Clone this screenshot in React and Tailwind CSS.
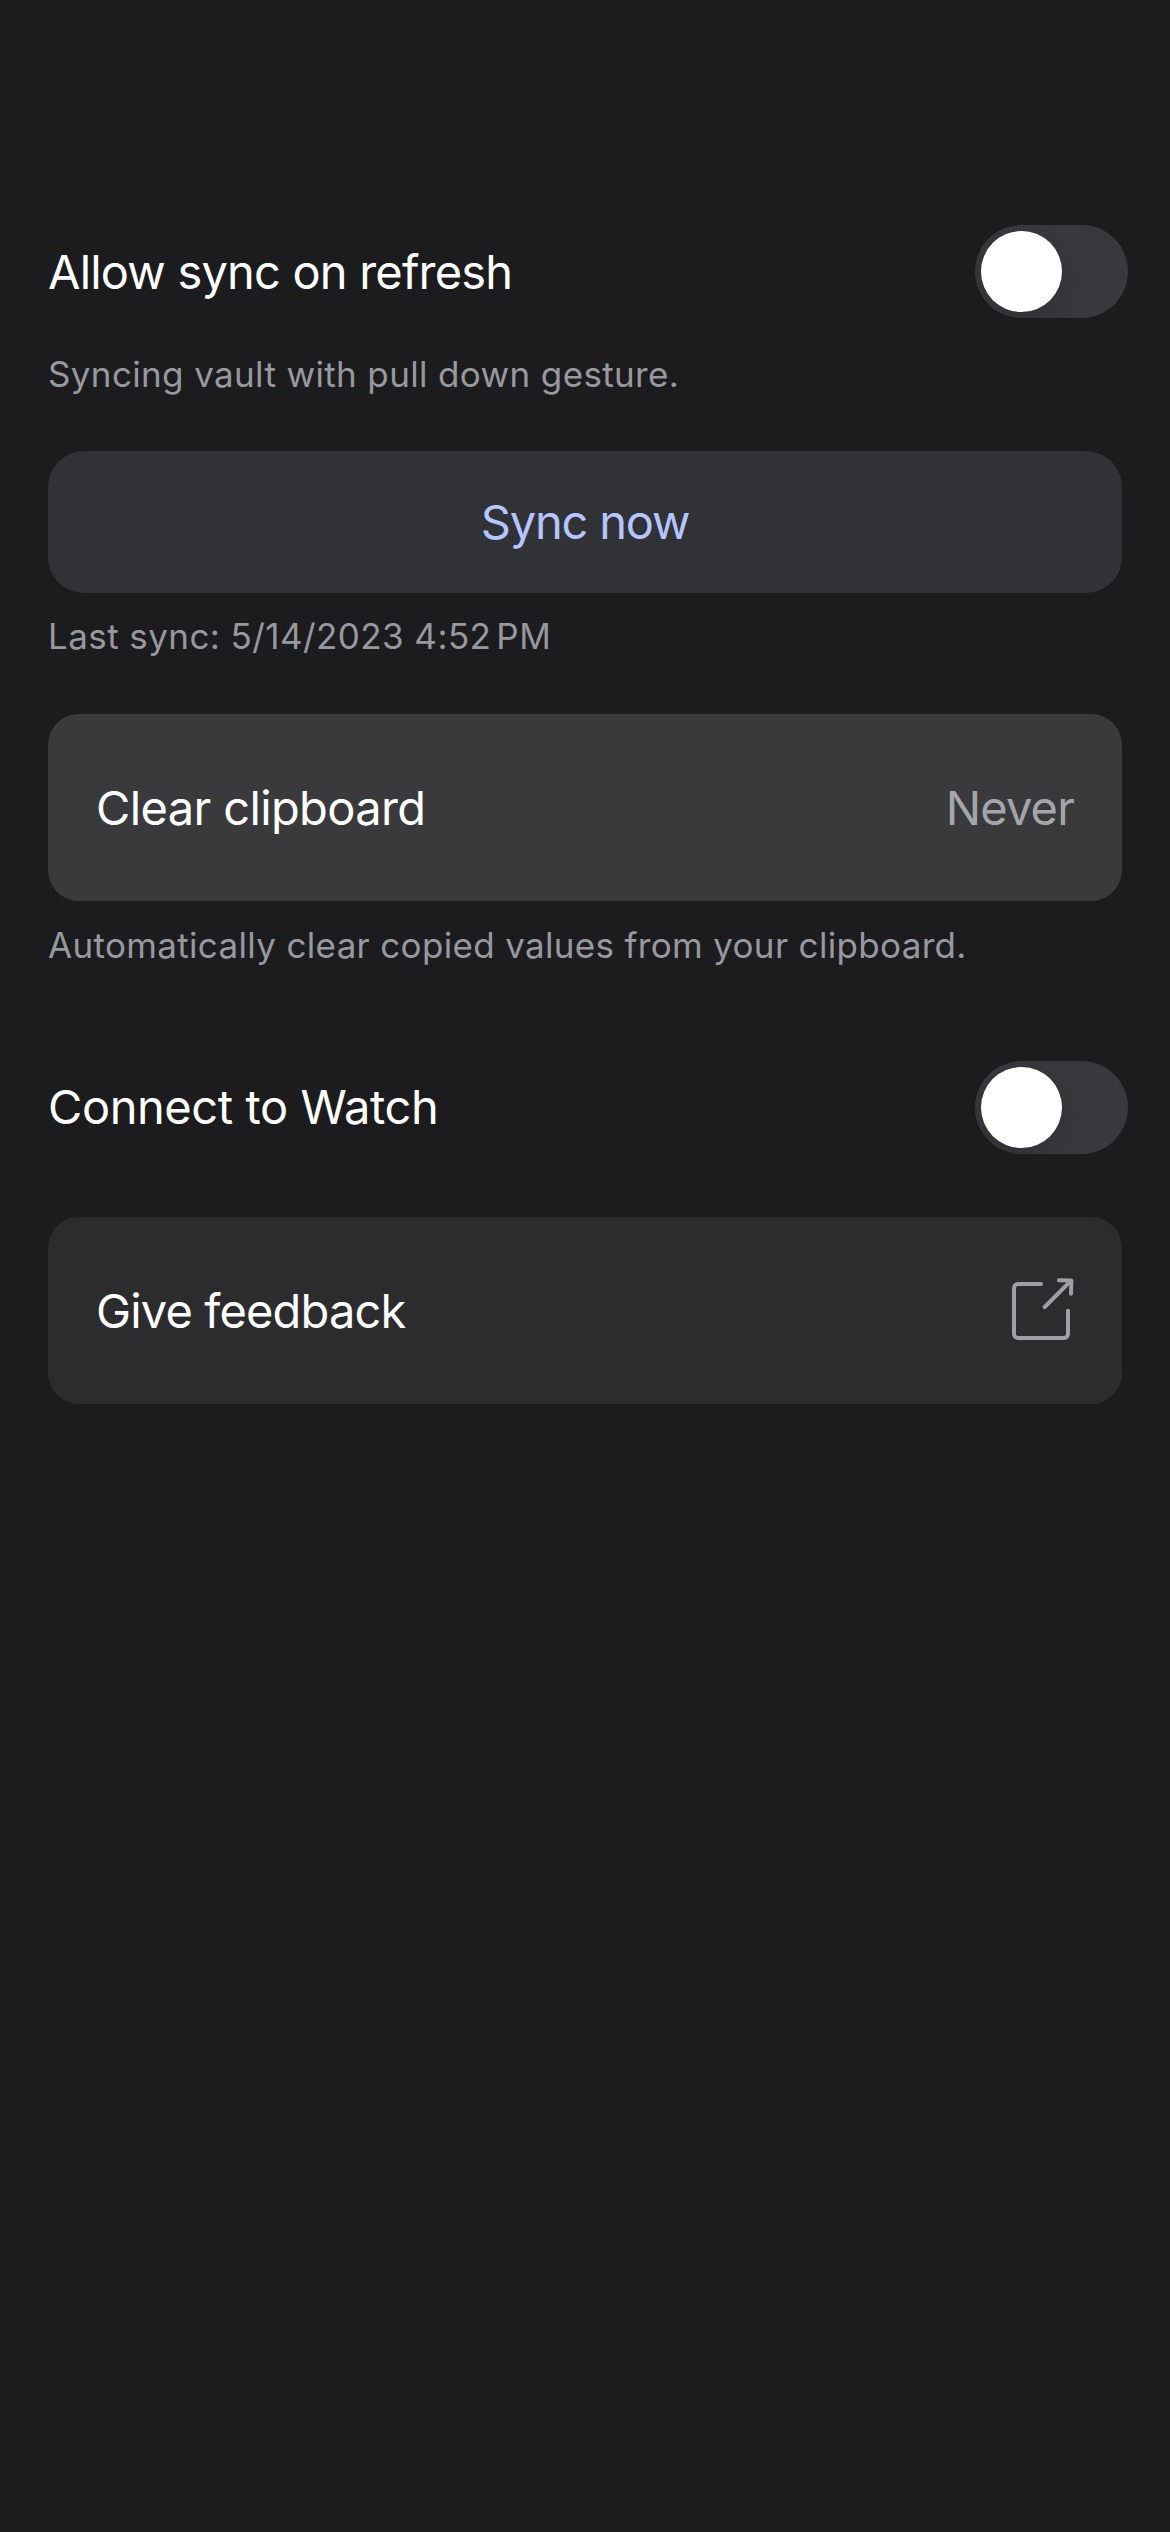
function Toggle({ label }) {
  return (
    <button
      type="button"
      role="switch"
      aria-checked="false"
      aria-label={label}
      className="flex h-[93px] w-[153px] shrink-0 items-center overflow-hidden rounded-full bg-[#39393d] p-[6px]"
    >
      <span className="size-[81px] rounded-full bg-white shadow-[0_9px_24px_rgba(0,0,0,0.15)]" />
    </button>
  );
}

function ExternalIcon() {
  return (
    <svg
      viewBox="0 0 62 62"
      className="mb-[3px] size-[62px] text-[#9f9fa6]"
      fill="none"
      stroke="currentColor"
      strokeWidth="4"
      strokeLinecap="round"
      strokeLinejoin="round"
      aria-hidden="true"
    >
      <path d="M29 6H6a4 4 0 0 0-4 4v46a4 4 0 0 0 4 4h46a4 4 0 0 0 4-4V32.8" />
      <path d="M32.7 29 59 2.7M46.8 2.2l12 .3q.6 0 .6.6L59 15.8" />
    </svg>
  );
}

export default function App() {
  return (
    <main className="min-h-[2532px] w-[1170px] bg-[#1c1c1e] px-12 pt-[225px] font-['Inter',sans-serif] text-[47px] leading-[60px] text-white">
      <div className="-mr-[6px] flex items-center justify-between">
        <span className="tracking-[-0.8px]">Allow sync on refresh</span>
        <Toggle label="Allow sync on refresh" />
      </div>
      <p className="mt-[34px] text-[35px] leading-[44px] tracking-[0.36px] text-[#98989f]">
        Syncing vault with pull down gesture.
      </p>

      <button
        type="button"
        className="mt-[55px] flex h-[142px] w-full items-center justify-center rounded-[36px] bg-[#313235] tracking-[-1.2px] text-[#b4c5ff]"
      >
        Sync now
      </button>
      <p className="mt-[21px] text-[35px] leading-[44px] tracking-[0.42px] text-[#98989f]">
        Last sync: 5/14/2023 4:52<span className="ml-[5px] tracking-[0.6px]">PM</span>
      </p>

      <div className="mt-[56px] flex h-[187px] items-center justify-between rounded-[31px] bg-[#3a3a3c] px-12">
        <span className="tracking-[-0.62px]">Clear clipboard</span>
        <span className="tracking-[-0.85px] text-[#a4a4ab]">Never</span>
      </div>
      <p className="mt-[22px] text-[35px] leading-[44px] tracking-[0.33px] text-[#98989f]">
        Automatically clear copied values from your clipboard.
      </p>

      <div className="-mr-[6px] mt-[94px] flex items-center justify-between">
        <span className="mb-[2px] tracking-[-0.42px]">Connect to Watch</span>
        <Toggle label="Connect to Watch" />
      </div>

      <div className="mt-[63px] flex h-[187px] items-center justify-between rounded-[31px] bg-[#2c2c2e] px-12">
        <span className="tracking-[-0.85px]">Give feedback</span>
        <ExternalIcon />
      </div>
    </main>
  );
}
